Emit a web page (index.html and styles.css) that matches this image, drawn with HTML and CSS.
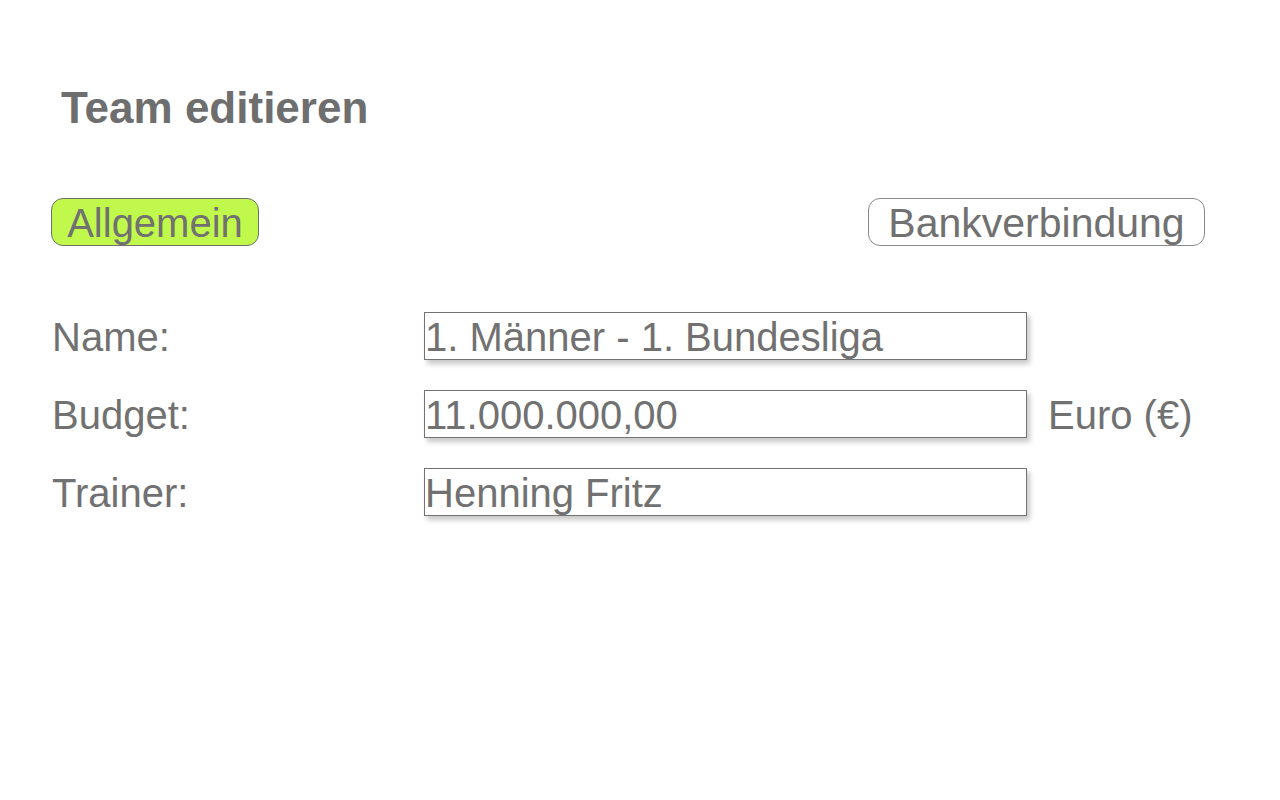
FILE: index.html
```html
<!DOCTYPE html>
<html lang="de">
<head>
<meta charset="utf-8">
<title>Team editieren</title>
<link rel="stylesheet" href="styles.css">
</head>
<body>
<main class="page">
  <h1 class="title">Team editieren</h1>
  <nav class="tabs">
    <button class="tab tab-active" type="button">Allgemein</button>
    <button class="tab tab-bank" type="button">Bankverbindung</button>
  </nav>
  <form class="form">
    <label class="label" for="name">Name:</label>
    <input class="field" id="name" type="text" value="1. Männer - 1. Bundesliga">
    <span></span>
    <label class="label" for="budget">Budget:</label>
    <input class="field" id="budget" type="text" value="11.000.000,00">
    <span class="unit">Euro (€)</span>
    <label class="label" for="trainer">Trainer:</label>
    <input class="field" id="trainer" type="text" value="Henning Fritz">
    <span></span>
  </form>
</main>
</body>
</html>
```

FILE: styles.css
```css
* { box-sizing: border-box; }
html, body {
  margin: 0;
  padding: 0;
  background: #ffffff;
}
body {
  font-family: "Liberation Sans", Arial, Helvetica, sans-serif;
  color: #717171;
}
.page {
  width: 1280px;
  height: 800px;
  padding: 82px 75px 0 51px;
}
.title {
  margin: 0 0 0 10px;
  font-size: 44px;
  line-height: 51px;
  font-weight: 700;
  color: #6e6e6e;
}
.tabs {
  margin-top: 65px;
  display: flex;
  justify-content: space-between;
}
.tab {
  height: 48px;
  border: 1px solid #7a7a7a;
  border-radius: 12px;
  background: #ffffff;
  color: #717171;
  font-family: "Liberation Sans", Arial, Helvetica, sans-serif;
  font-size: 40px;
  line-height: 44px;
  padding: 2px 0 0 0;
  text-align: center;
}
.tab-active {
  width: 208px;
  background: #c0f94b;
  border-color: #6f6f6f;
}
.tab-bank {
  width: 337px;
  border-color: #8a8a8a;
  font-size: 41px;
}
.form {
  margin-top: 66px;
  display: grid;
  grid-template-columns: 372px 603px auto;
  grid-auto-rows: 48px;
  column-gap: 0;
  row-gap: 30px;
  align-items: start;
  padding-left: 1px;
}
.label {
  font-size: 40px;
  line-height: 48px;
  padding-top: 1px;
}
.field {
  width: 603px;
  height: 48px;
  margin: 0;
  padding: 2px 0 0 0;
  border: 1px solid #737373;
  border-radius: 0;
  background: #ffffff;
  color: #717171;
  font-family: "Liberation Sans", Arial, Helvetica, sans-serif;
  font-size: 40px;
  box-shadow: 3px 4px 5px rgba(0, 0, 0, 0.22);
  outline: none;
}
.unit {
  font-size: 40px;
  line-height: 48px;
  padding-top: 1px;
  padding-left: 21px;
}
```
